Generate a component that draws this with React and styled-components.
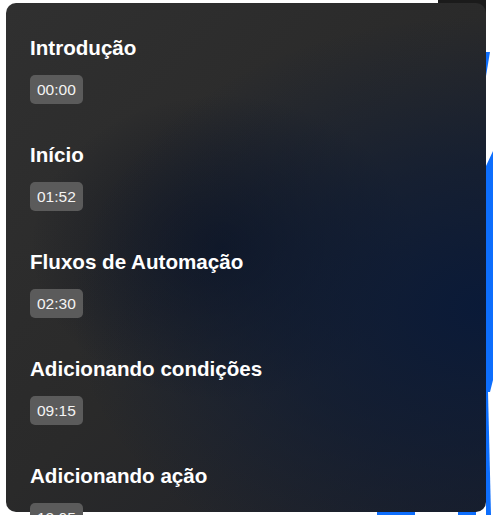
import React from "react";
import styled, { createGlobalStyle } from "styled-components";

const chapters = [
  { title: "Introdução", time: "00:00" },
  { title: "Início", time: "01:52" },
  { title: "Fluxos de Automação", time: "02:30" },
  { title: "Adicionando condições", time: "09:15" },
  { title: "Adicionando ação", time: "12:05" },
];

const App = () => {
  return (
    <Page>
      <GlobalStyle />
      <Backdrop width="493" height="515" viewBox="0 0 493 515">
        <rect x="438" y="0" width="48" height="20" fill="#1b1b1b" />
        <polygon points="486,52 490,52 486,76" fill="#0d6efd" />
        <polygon points="486,166 493,151 493,380 490,392 486,392" fill="#0d6efd" />
        <polygon points="486,392 488,392 491,515 486,515" fill="#0d6efd" />
        <polygon points="377,505 415,505 415,515 377,515" fill="#0d6efd" />
        <polygon points="458,505 476,505 476,515 458,515" fill="#0d6efd" />
      </Backdrop>
      <Panel>
        {chapters.map((item, index) => (
          <Chapter key={index}>
            <Title>{item.title}</Title>
            <Time>{item.time}</Time>
          </Chapter>
        ))}
      </Panel>
    </Page>
  );
};

export default App;

// CSS

const GlobalStyle = createGlobalStyle`
  html, body {
    margin: 0;
    padding: 0;
    background: #ffffff;
    overflow: hidden;
  }
  body {
    font-family: "Liberation Sans", Arial, sans-serif;
  }
`;

const Page = styled.div`
  position: relative;
  width: 493px;
  height: 515px;
  overflow: hidden;
  padding: 3px 0 0 6px;
  box-sizing: border-box;
`;

const Backdrop = styled.svg`
  position: absolute;
  top: 0;
  left: 0;
`;

const Panel = styled.div`
  position: relative;
  width: 480px;
  height: 509px;
  box-sizing: border-box;
  padding: 33px 24px 0;
  border-radius: 10px;
  background:
    radial-gradient(120% 80% at 100% 60%, #0a1a38 0%, rgba(11, 26, 54, 0.6) 35%, rgba(11, 26, 54, 0) 72%),
    radial-gradient(40% 30% at 45% 48%, rgba(12, 18, 32, 0.8) 0%, rgba(12, 18, 32, 0) 100%),
    linear-gradient(135deg, #303030 0%, #2a2a2a 50%, #1d2029 100%);
  display: flex;
  flex-direction: column;
  gap: 39px;
`;

const Chapter = styled.div`
  display: flex;
  flex-direction: column;
  align-items: flex-start;
  gap: 16px;
`;

const Title = styled.h3`
  margin: 0;
  font-size: 20.6px;
  line-height: 23px;
  font-weight: 700;
  color: #ffffff;
`;

const Time = styled.span`
  display: inline-block;
  height: 29px;
  line-height: 29px;
  padding: 0 7px;
  border-radius: 5px;
  background: #5b5b5b;
  color: #f4f4f4;
  font-size: 15.5px;
`;
